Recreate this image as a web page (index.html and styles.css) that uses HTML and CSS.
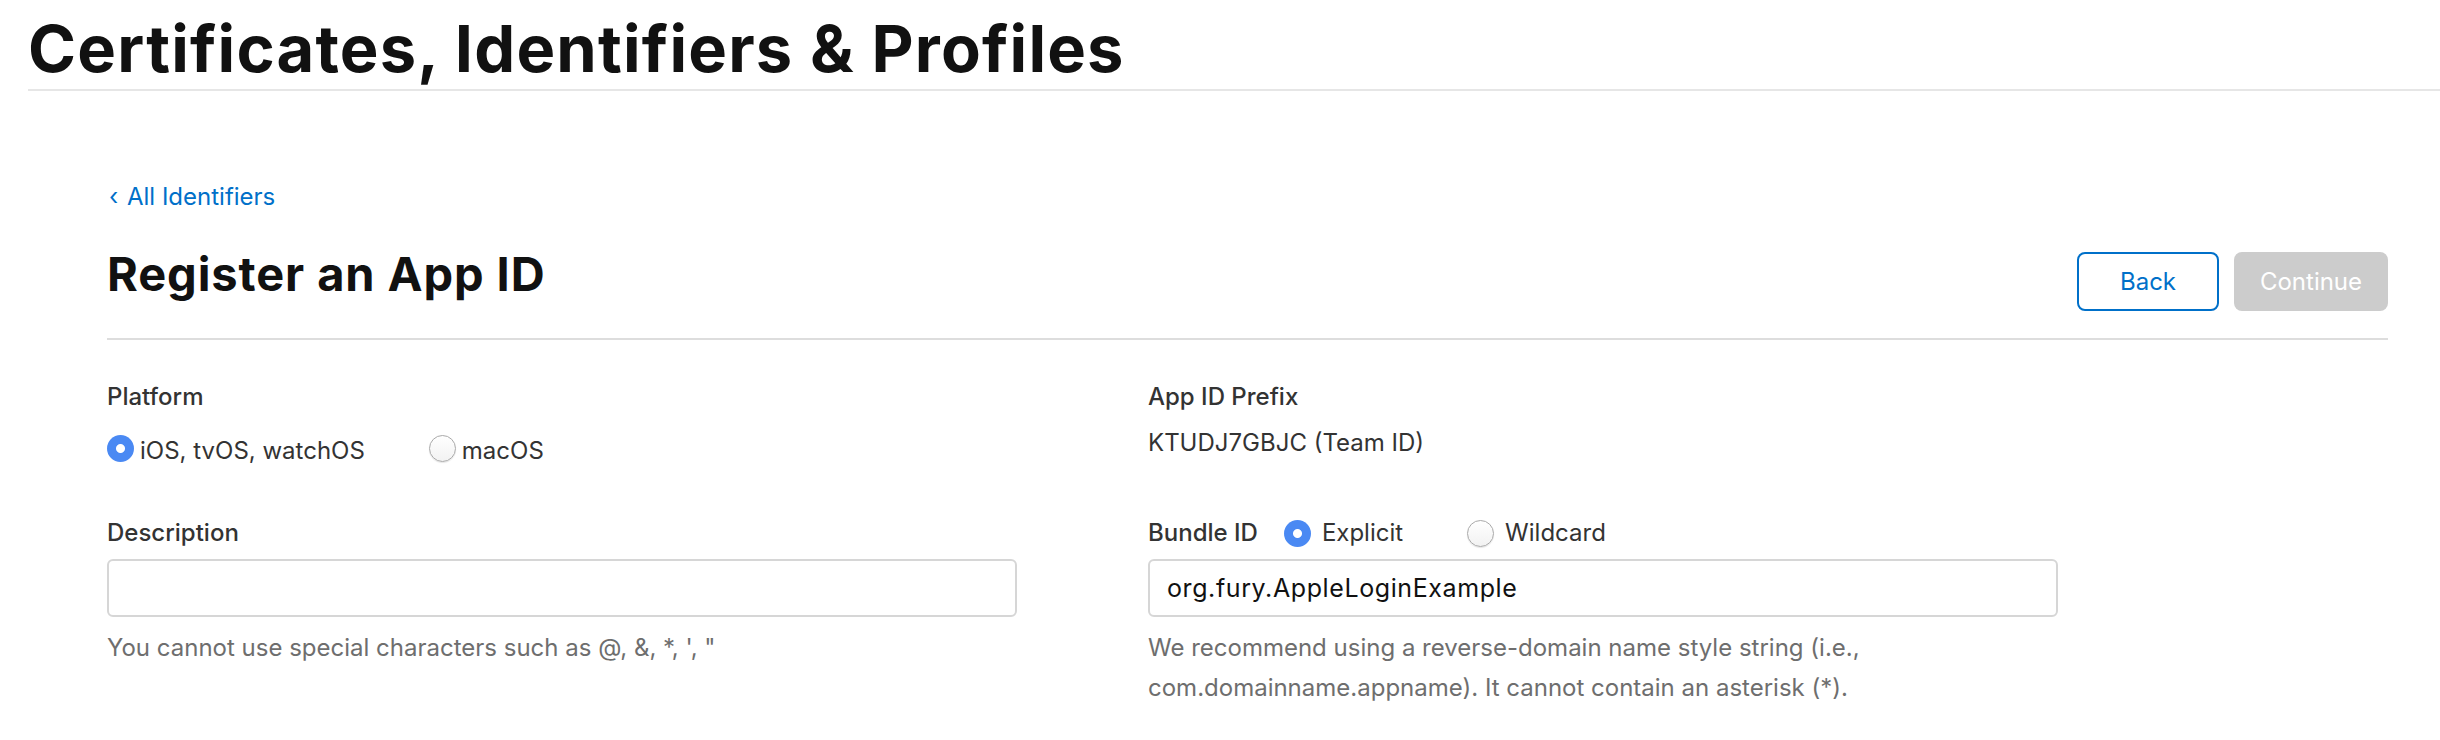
FILE: index.html
```html
<!DOCTYPE html>
<html lang="en">
<head>
  <meta charset="UTF-8">
  <meta name="viewport" content="width=device-width, initial-scale=1.0">
  <title>Register an App ID</title>
  <link rel="stylesheet" href="styles.css">
</head>
<body>
  <header class="page-header">
    <h1>Certificates, Identifiers &amp; Profiles</h1>
  </header>

  <main class="content">
    <a class="back-link" href="#"><span class="chevron">‹</span> All Identifiers</a>

    <div class="title-row">
      <h2>Register an App ID</h2>
      <div class="actions">
        <button class="btn btn-back">Back</button>
        <button class="btn btn-continue" disabled>Continue</button>
      </div>
    </div>

    <form class="form-grid">
      <div class="field">
        <div class="label">Platform</div>
        <div class="radio-group platform">
          <label class="radio"><input type="radio" name="platform" checked><span>iOS, tvOS, watchOS</span></label>
          <label class="radio"><input type="radio" name="platform"><span>macOS</span></label>
        </div>
      </div>

      <div class="field">
        <div class="label">App ID Prefix</div>
        <div class="value">KTUDJ7GBJC (Team ID)</div>
      </div>

      <div class="field">
        <div class="label">Description</div>
        <input class="text-input" type="text">
        <p class="help">You cannot use special characters such as @, &amp;, *, ', "</p>
      </div>

      <div class="field">
        <div class="label label-row">
          Bundle ID
          <div class="radio-group bundle">
            <label class="radio"><input type="radio" name="bundle" checked><span>Explicit</span></label>
            <label class="radio"><input type="radio" name="bundle"><span>Wildcard</span></label>
          </div>
        </div>
        <input class="text-input" type="text" value="org.fury.AppleLoginExample">
        <p class="help">We recommend using a reverse-domain name style string (i.e., com.domainname.appname). It cannot contain an asterisk (*).</p>
      </div>
    </form>
  </main>
</body>
</html>
```

FILE: styles.css
```css
body {
  margin: 0;
  padding: 0;
  background-color: #fff;
  font-family: Inter, "Liberation Sans", Arial, sans-serif;
  color: #333;
}

.page-header {
  padding-left: 28px;
}

h1 {
  margin: 0;
  padding-top: 9px;
  font-size: 65px;
  line-height: 80px;
  font-weight: 700;
  color: #111;
  letter-spacing: 1.2px;
  border-bottom: 2px solid #e6e6e6;
}

.content {
  padding: 0 52px 0 107px;
}

.back-link {
  display: inline-block;
  margin-top: 91px;
  font-size: 24px;
  line-height: 30px;
  color: #0070c9;
  text-decoration: none;
}

.chevron {
  margin-left: 2px;
  margin-right: 2px;
}

.title-row {
  display: flex;
  justify-content: space-between;
  align-items: flex-start;
  margin-top: 32px;
  padding-bottom: 27px;
  border-bottom: 2px solid #ddd;
}

h2 {
  margin: 0;
  font-size: 47px;
  line-height: 60px;
  font-weight: 700;
  color: #111;
  letter-spacing: 0.9px;
}

.actions {
  display: flex;
  gap: 15px;
  margin-top: 8px;
}

.btn {
  height: 59px;
  border-radius: 8px;
  font-family: inherit;
  font-size: 24px;
  cursor: pointer;
}

.btn-back {
  width: 142px;
  background-color: #fff;
  color: #0070c9;
  border: 2px solid #0070c9;
}

.btn-continue {
  width: 154px;
  background-color: #ccc;
  color: #fff;
  border: none;
}

.form-grid {
  display: grid;
  grid-template-columns: 1041px 1fr;
  row-gap: 54px;
  margin-top: 42px;
}

.label {
  font-size: 24px;
  line-height: 30px;
  font-weight: 500;
  color: #333;
}

.label-row {
  display: flex;
  align-items: center;
  gap: 26px;
}

.radio-group {
  display: flex;
  gap: 64px;
}

.platform {
  margin-top: 20px;
}

.radio {
  display: flex;
  align-items: center;
  gap: 6px;
  font-size: 24px;
  font-weight: 400;
  color: #333;
  line-height: 27px;
}

.platform .radio span {
  padding-top: 5px;
}

.bundle .radio {
  gap: 11px;
  line-height: 30px;
}

.radio input {
  appearance: none;
  -webkit-appearance: none;
  margin: 0;
  width: 27px;
  height: 27px;
  border-radius: 50%;
  border: 1px solid #a9a9a9;
  background: linear-gradient(#fff, #f2f2f2);
  box-shadow: 0 1px 1px rgba(0,0,0,0.1);
}

.radio input:checked {
  border: none;
  background: radial-gradient(circle, #fff 0, #fff 4px, #4a89f3 5px);
  box-shadow: none;
}

.value {
  margin-top: 16px;
  font-size: 24px;
  line-height: 30px;
  color: #333;
}

.text-input {
  display: block;
  box-sizing: border-box;
  width: 910px;
  height: 58px;
  margin-top: 11px;
  padding: 0 17px;
  border: 2px solid #d6d6d6;
  border-radius: 6px;
  font-family: inherit;
  font-size: 25px;
  color: #111;
  letter-spacing: 0.6px;
}

.help {
  margin: 11px 0 0;
  max-width: 910px;
  font-size: 24px;
  line-height: 40px;
  color: #6e6e6e;
}
```
